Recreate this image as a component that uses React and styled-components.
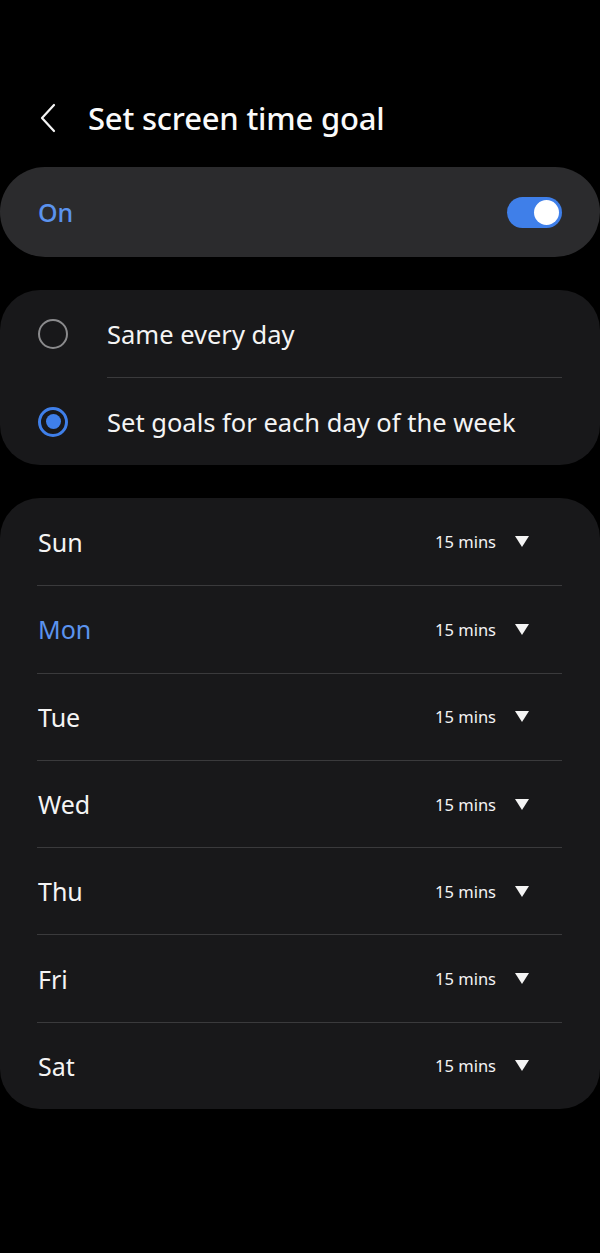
import React from "react"
import styled, { createGlobalStyle } from "styled-components"

const GlobalStyle = createGlobalStyle`
  html, body {
    margin: 0;
    padding: 0;
    background: #000;
  }
  body {
    font-family: "Noto Sans", "Open Sans", sans-serif;
    color: #fafafa;
  }
`

const Page = styled.div`
  width: 600px;
  min-height: 1253px;
  background: #000;
  box-sizing: border-box;
  padding-top: 97px;
  display: flex;
  flex-direction: column;
`

const Header = styled.header`
  display: flex;
  align-items: center;
  height: 42px;
  padding-left: 38px;
  margin-bottom: 28px;
`

const BackButton = styled.button`
  width: 30px;
  height: 42px;
  padding: 0;
  background: none;
  border: none;
  display: flex;
  align-items: center;
  margin-right: 20px;
`

const Title = styled.h1`
  margin: 0;
  font-size: 31px;
  font-weight: 500;
  letter-spacing: -0.2px;
  color: #fafafa;
`

const Card = styled.section`
  background: ${props => props.$bg || "#18181a"};
  border-radius: ${props => props.$radius || 40}px;
  margin-bottom: 33px;
  overflow: hidden;
`

const SwitchRow = styled.div`
  height: 90px;
  display: flex;
  align-items: center;
  justify-content: space-between;
  padding: 0 38px;
`

const OnLabel = styled.span`
  font-size: 25px;
  font-weight: 500;
  color: #5b93ee;
`

const Toggle = styled.div`
  width: 55px;
  height: 31px;
  border-radius: 16px;
  background: #3f7fe9;
  position: relative;
  &::after {
    content: "";
    position: absolute;
    right: 3px;
    top: 3px;
    width: 25px;
    height: 25px;
    border-radius: 50%;
    background: #fff;
  }
`

const OptionList = styled.div`
  display: flex;
  flex-direction: column;
  padding: 0 38px;
`

const OptionRow = styled.label`
  height: 87px;
  display: flex;
  align-items: center;
  & + & {
    border-top: 1px solid #3a3a3c;
    margin-left: 69px;
  }
  & + & > span:first-child {
    margin-left: -69px;
  }
`

const Radio = styled.span`
  width: 30px;
  height: 30px;
  box-sizing: border-box;
  border-radius: 50%;
  border: ${props => (props.$checked ? "3px solid #3f7fe9" : "2px solid #8a8a8c")};
  margin-right: 39px;
  flex-shrink: 0;
  display: flex;
  align-items: center;
  justify-content: center;
  &::after {
    content: "";
    display: ${props => (props.$checked ? "block" : "none")};
    width: 15px;
    height: 15px;
    border-radius: 50%;
    background: #3f7fe9;
  }
`

const OptionText = styled.span`
  font-size: 25.5px;
  color: #f4f4f4;
`

const DayList = styled.div`
  display: flex;
  flex-direction: column;
  padding: 0 38px 0 37px;
`

const DayRow = styled.div`
  height: 87.3px;
  display: flex;
  align-items: center;
  justify-content: space-between;
  box-sizing: border-box;
  & + & {
    border-top: 1px solid #3a3a3c;
  }
`

const DayName = styled.span`
  font-size: 25px;
  color: ${props => (props.$active ? "#5b93ee" : "#f4f4f4")};
  padding-left: 1px;
`

const Duration = styled.div`
  display: flex;
  align-items: center;
  gap: 19px;
  margin-right: 33px;
  font-size: 16.5px;
  color: #f4f4f4;
`

const Caret = styled.span`
  width: 0;
  height: 0;
  border-left: 7px solid transparent;
  border-right: 7px solid transparent;
  border-top: 11px solid #f4f4f4;
`

const days = ["Sun", "Mon", "Tue", "Wed", "Thu", "Fri", "Sat"]

const App = () => {
  return (
    <>
      <GlobalStyle />
      <Page>
        <Header>
          <BackButton aria-label="Back">
            <svg width="20" height="30" viewBox="0 0 20 30">
              <path
                d="M16 2 L4 15 L16 28"
                fill="none"
                stroke="#f4f4f4"
                strokeWidth="2.2"
                strokeLinecap="round"
                strokeLinejoin="round"
              />
            </svg>
          </BackButton>
          <Title>Set screen time goal</Title>
        </Header>

        <Card $bg="#2b2b2d" $radius={45}>
          <SwitchRow>
            <OnLabel>On</OnLabel>
            <Toggle />
          </SwitchRow>
        </Card>

        <Card>
          <OptionList>
            <OptionRow>
              <Radio />
              <OptionText>Same every day</OptionText>
            </OptionRow>
            <OptionRow>
              <Radio $checked />
              <OptionText>Set goals for each day of the week</OptionText>
            </OptionRow>
          </OptionList>
        </Card>

        <Card>
          <DayList>
            {days.map(day => (
              <DayRow key={day}>
                <DayName $active={day === "Mon"}>{day}</DayName>
                <Duration>
                  15 mins
                  <Caret />
                </Duration>
              </DayRow>
            ))}
          </DayList>
        </Card>
      </Page>
    </>
  )
}

export default App
